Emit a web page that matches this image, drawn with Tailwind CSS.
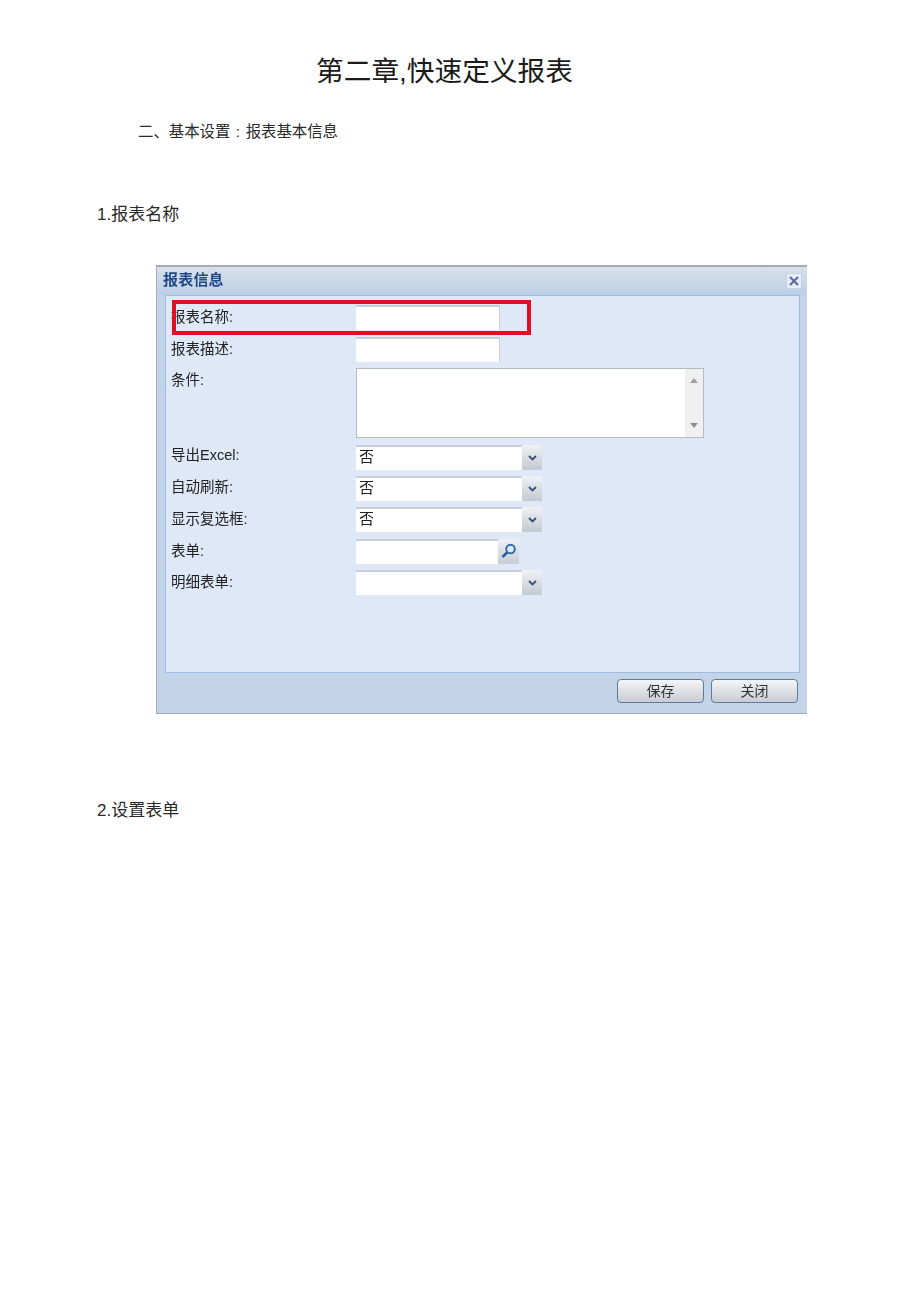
<!DOCTYPE html>
<html lang="zh-CN">
<head>
  <meta charset="UTF-8" />
  <title>第二章,快速定义报表</title>
  <script src="https://cdn.jsdelivr.net/npm/@tailwindcss/browser@4"></script>
</head>
<body class="bg-white text-[#1a1a1a] font-['Liberation_Sans','Noto_Sans_CJK_SC',sans-serif]">
  <div class="h-[1301px] overflow-hidden pt-[52px]">
    <h1 class="ml-[316px] text-[27.7px] leading-[40px] whitespace-nowrap">第二章,快速定义报表</h1>

    <p class="ml-[138px] mt-[30px] text-[15.4px] leading-[20px] whitespace-nowrap text-[#2a2a2a]">二、基本设置<span class="px-[5.5px]">:</span>报表基本信息</p>

    <p class="ml-[97px] mt-[62px] text-[17px] leading-[22px] whitespace-nowrap text-[#2a2a2a]">1.报表名称</p>

    <!-- 报表信息 对话框 -->
    <div class="relative ml-[156px] mt-[39px] w-[651px] h-[449px] border-t-2 border-l border-b border-[#a3adb8] bg-[#c3d4e8] blur-[0.5px]">
      <div class="h-[28px] flex items-center justify-between pl-[6px] pr-[5px] bg-linear-to-b from-[#d9e0e9] to-[#bccee6]">
        <span class="text-[15px] font-bold text-[#1f4a8c] tracking-[0.2px] pb-[2px]">报表信息</span>
        <div class="w-[16px] h-[16px] rounded-[2px] bg-[#e6edf6] border border-[#c4d2e4] flex items-center justify-center">
          <svg width="10" height="10" viewBox="0 0 10 10"><path d="M1 1L9 9M9 1L1 9" stroke="#5a6f9e" stroke-width="2.2" /></svg>
        </div>
      </div>

      <div class="ml-[8px] mr-[7px] h-[378px] border border-[#9dbbe3] bg-[#dfe8f6] pl-[5px] pt-[9px]">
        <div class="flex flex-col text-[14.5px] text-[#222]">
          <div class="flex items-center h-[25px]">
            <label class="w-[185px]">报表名称:</label>
            <div class="w-[144px] h-[25px] bg-white border-t-2 border-r border-[#c9cfd8]"></div>
          </div>
          <div class="flex items-center h-[25px] mt-[7px]">
            <label class="w-[185px]">报表描述:</label>
            <div class="w-[144px] h-[25px] bg-white border-t-2 border-r border-[#c9cfd8]"></div>
          </div>
          <div class="flex h-[70px] mt-[6px]">
            <label class="w-[185px] pt-[2px]">条件:</label>
            <div class="w-[348px] h-[70px] bg-white border border-[#b4bbc5] flex justify-end">
              <div class="w-[18px] bg-[#f0f0f0] flex flex-col items-center justify-between py-[9px]">
                <svg width="8" height="5" viewBox="0 0 8 5"><path d="M4 0L8 5H0Z" fill="#a0a0a0" /></svg>
                <svg width="8" height="5" viewBox="0 0 8 5"><path d="M4 5L8 0H0Z" fill="#909090" /></svg>
              </div>
            </div>
          </div>
          <div class="flex items-center h-[25px] mt-[7px]">
            <label class="w-[185px] pb-[3px]">导出Excel:</label>
            <div class="w-[166px] h-[25px] bg-white border-t-2 border-[#c9cfd8] pl-[3px] leading-[20px] text-[15px]">否</div>
            <div class="w-[20px] h-[25px] bg-linear-to-b from-[#f0f2f5] to-[#c3c9d1] flex items-center justify-center">
              <svg width="9" height="6" viewBox="0 0 9 6"><path d="M1 1L4.500 4.500L8 1" fill="none" stroke="#34507c" stroke-width="1.800" /></svg>
            </div>
          </div>
          <div class="flex items-center h-[25px] mt-[6px]">
            <label class="w-[185px] pb-[1px]">自动刷新:</label>
            <div class="w-[166px] h-[25px] bg-white border-t-2 border-[#c9cfd8] pl-[3px] leading-[20px] text-[15px]">否</div>
            <div class="w-[20px] h-[25px] bg-linear-to-b from-[#f0f2f5] to-[#c3c9d1] flex items-center justify-center">
              <svg width="9" height="6" viewBox="0 0 9 6"><path d="M1 1L4.500 4.500L8 1" fill="none" stroke="#34507c" stroke-width="1.800" /></svg>
            </div>
          </div>
          <div class="flex items-center h-[25px] mt-[6px]">
            <label class="w-[185px]">显示复选框:</label>
            <div class="w-[166px] h-[25px] bg-white border-t-2 border-[#c9cfd8] pl-[3px] leading-[20px] text-[15px]">否</div>
            <div class="w-[20px] h-[25px] bg-linear-to-b from-[#f0f2f5] to-[#c3c9d1] flex items-center justify-center">
              <svg width="9" height="6" viewBox="0 0 9 6"><path d="M1 1L4.500 4.500L8 1" fill="none" stroke="#34507c" stroke-width="1.800" /></svg>
            </div>
          </div>
          <div class="flex items-center h-[25px] mt-[7px]">
            <label class="w-[185px]">表单:</label>
            <div class="w-[142px] h-[25px] bg-white border-t-2 border-[#c9cfd8]"></div>
            <div class="w-[21px] h-[25px] bg-linear-to-b from-[#eef1f5] to-[#c6ccd5] flex items-center justify-center">
              <svg width="17" height="17" viewBox="0 0 17 17"><circle cx="10.500" cy="6" r="4.300" fill="#dbe8f6" stroke="#2c6aa8" stroke-width="1.900" /><path d="M7.300 9.300L2.500 14" stroke="#2c5f96" stroke-width="2.600" /></svg>
            </div>
          </div>
          <div class="flex items-center h-[25px] mt-[6px]">
            <label class="w-[185px]">明细表单:</label>
            <div class="w-[166px] h-[25px] bg-white border-t-2 border-[#c9cfd8]"></div>
            <div class="w-[20px] h-[25px] bg-linear-to-b from-[#f0f2f5] to-[#c3c9d1] flex items-center justify-center">
              <svg width="9" height="6" viewBox="0 0 9 6"><path d="M1 1L4.500 4.500L8 1" fill="none" stroke="#34507c" stroke-width="1.800" /></svg>
            </div>
          </div>
        </div>
      </div>

      <div class="flex justify-end gap-[7px] pt-[6px] pr-[9px]">
        <button class="w-[87px] h-[24px] rounded-[4px] border-[1.5px] border-[#5d7a9c] bg-linear-to-b from-[#f4f5f7] to-[#c9ccd2] text-[14px] text-[#333]">保存</button>
        <button class="w-[87px] h-[24px] rounded-[4px] border-[1.5px] border-[#5d7a9c] bg-linear-to-b from-[#f4f5f7] to-[#c9ccd2] text-[14px] text-[#333]">关闭</button>
      </div>

      <!-- 红框标注 -->
      <div class="absolute left-[15px] top-[33px] w-[359px] h-[35px] border-4 border-[#e00f25]"></div>
    </div>

    <p class="ml-[97px] mt-[86px] text-[17px] leading-[22px] whitespace-nowrap text-[#2a2a2a]">2.设置表单</p>
  </div>
</body>
</html>
